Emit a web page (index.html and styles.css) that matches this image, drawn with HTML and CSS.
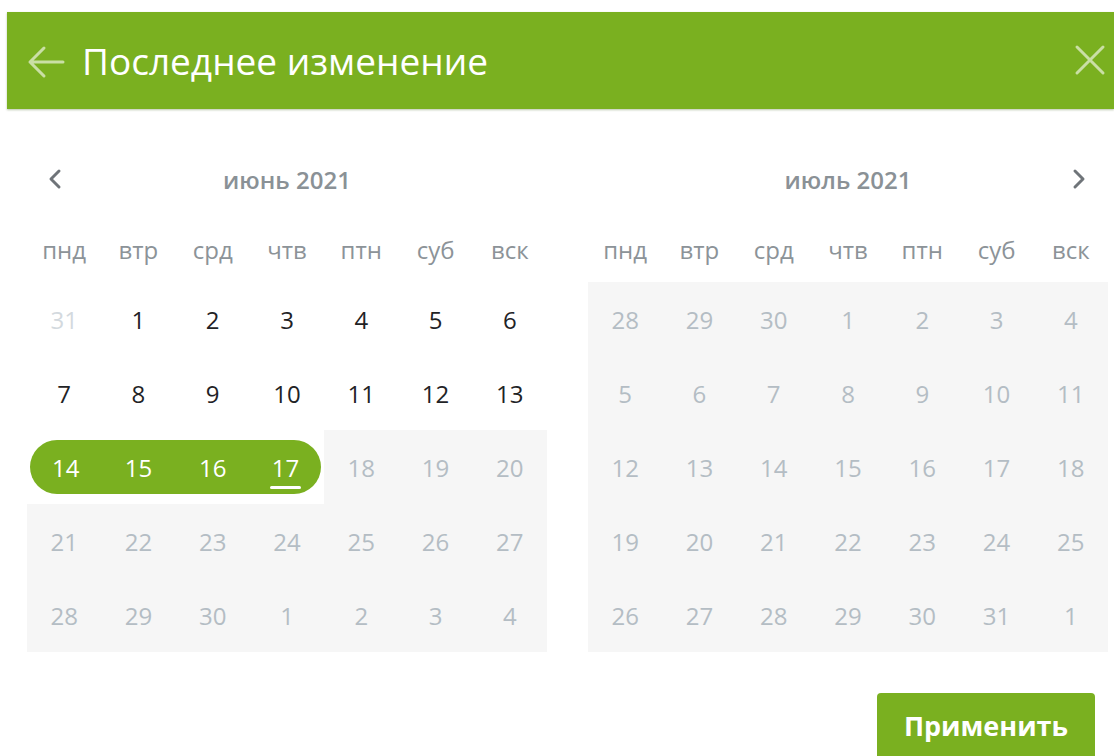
FILE: index.html
```html
<!DOCTYPE html>
<html lang="ru">
<head>
<meta charset="utf-8">
<title>Последнее изменение</title>
<link rel="stylesheet" href="styles.css">
</head>
<body>
<div class="dialog">
  <header class="dialog-head">
    <svg class="icon-back" width="38" height="34" viewBox="0 0 38 34" aria-hidden="true">
      <path d="M36 17H3M17 3L3 17l14 14" fill="none" stroke="currentColor" stroke-width="3" stroke-linecap="round" stroke-linejoin="round"/>
    </svg>
    <h1 class="dialog-title">Последнее изменение</h1>
    <svg class="icon-close" width="32" height="32" viewBox="0 0 32 32" aria-hidden="true">
      <path d="M3 3l26 26M29 3L3 29" fill="none" stroke="currentColor" stroke-width="3" stroke-linecap="round"/>
    </svg>
  </header>

  <div class="calendars">
    <section class="month">
      <div class="month-nav">
        <svg class="chev chev-left" width="16" height="22" viewBox="0 0 16 22" aria-hidden="true">
          <path d="M12 3L4 11l8 8" fill="none" stroke="currentColor" stroke-width="3" stroke-linecap="round" stroke-linejoin="round"/>
        </svg>
        <span class="month-name">июнь 2021</span>
      </div>
      <div class="grid">
        <span class="wd">пнд</span><span class="wd">втр</span><span class="wd">срд</span><span class="wd">чтв</span><span class="wd">птн</span><span class="wd">суб</span><span class="wd">вск</span>

        <span class="day other">31</span><span class="day">1</span><span class="day">2</span><span class="day">3</span><span class="day">4</span><span class="day">5</span><span class="day">6</span>
        <span class="day">7</span><span class="day">8</span><span class="day">9</span><span class="day">10</span><span class="day">11</span><span class="day">12</span><span class="day">13</span>
        <span class="day sel sel-start">14</span><span class="day sel">15</span><span class="day sel">16</span><span class="day sel sel-end"><span class="today">17</span></span><span class="day off">18</span><span class="day off">19</span><span class="day off">20</span>
        <span class="day off">21</span><span class="day off">22</span><span class="day off">23</span><span class="day off">24</span><span class="day off">25</span><span class="day off">26</span><span class="day off">27</span>
        <span class="day off">28</span><span class="day off">29</span><span class="day off">30</span><span class="day off">1</span><span class="day off">2</span><span class="day off">3</span><span class="day off">4</span>
      </div>
    </section>

    <section class="month">
      <div class="month-nav">
        <span class="month-name">июль 2021</span>
        <svg class="chev chev-right" width="16" height="22" viewBox="0 0 16 22" aria-hidden="true">
          <path d="M4 3l8 8-8 8" fill="none" stroke="currentColor" stroke-width="3" stroke-linecap="round" stroke-linejoin="round"/>
        </svg>
      </div>
      <div class="grid">
        <span class="wd">пнд</span><span class="wd">втр</span><span class="wd">срд</span><span class="wd">чтв</span><span class="wd">птн</span><span class="wd">суб</span><span class="wd">вск</span>

        <span class="day off">28</span><span class="day off">29</span><span class="day off">30</span><span class="day off">1</span><span class="day off">2</span><span class="day off">3</span><span class="day off">4</span>
        <span class="day off">5</span><span class="day off">6</span><span class="day off">7</span><span class="day off">8</span><span class="day off">9</span><span class="day off">10</span><span class="day off">11</span>
        <span class="day off">12</span><span class="day off">13</span><span class="day off">14</span><span class="day off">15</span><span class="day off">16</span><span class="day off">17</span><span class="day off">18</span>
        <span class="day off">19</span><span class="day off">20</span><span class="day off">21</span><span class="day off">22</span><span class="day off">23</span><span class="day off">24</span><span class="day off">25</span>
        <span class="day off">26</span><span class="day off">27</span><span class="day off">28</span><span class="day off">29</span><span class="day off">30</span><span class="day off">31</span><span class="day off">1</span>
      </div>
    </section>
  </div>

  <footer class="dialog-foot">
    <button class="btn-apply" type="button">Применить</button>
  </footer>
</div>
</body>
</html>
```

FILE: styles.css
```css
html, body {
  margin: 0;
  padding: 0;
  background: #fff;
  overflow: hidden;
}

body {
  font-family: "Open Sans", "Noto Sans", "DejaVu Sans", sans-serif;
  padding: 12px 0 0 7px;
}

.dialog {
  width: 1107px;
}

/* green title bar */
.dialog-head {
  height: 97px;
  background: #7ab020;
  display: flex;
  align-items: center;
  color: #fff;
  box-shadow: 0 1px 2px rgba(60, 90, 20, 0.35);
  padding: 0 8px 0 20px;
}

.icon-back {
  color: rgba(255, 255, 255, 0.6);
  margin-top: 2px;
  margin-right: 17px;
}

.dialog-title {
  margin: 0;
  font-weight: 400;
  font-size: 37px;
  flex: 1;
  margin-top: 0;
}

.icon-close {
  color: rgba(255, 255, 255, 0.6);
  margin-top: -1px;
}

/* two month panels */
.calendars {
  display: flex;
  gap: 41px;
  padding: 55px 0 0 20px;
}

.month {
  width: 520px;
}

.month-nav {
  height: 30px;
  display: flex;
  align-items: center;
  justify-content: center;
  position: relative;
}

.month-name {
  font-size: 24px;
  font-weight: 600;
  color: #8a9196;
}

.chev {
  color: #6f7479;
  position: absolute;
  top: 4px;
}

.chev-left { left: 20px; }
.chev-right { right: 21px; }

.grid {
  display: grid;
  grid-template-columns: repeat(7, 1fr);
  grid-template-rows: 66px;
  grid-auto-rows: 74px;
  margin-top: 22px;
}

.wd {
  display: flex;
  align-items: center;
  justify-content: center;
  font-size: 24px;
  color: #8c9398;
}

.day {
  display: flex;
  align-items: center;
  justify-content: center;
  font-size: 24px;
  color: #1f2326;
}

.day.other {
  color: #d3d9de;
}

.day.off {
  background: #f6f6f6;
  color: #b4bdc4;
}

.day.sel {
  background: #7ab020;
  color: #fff;
  margin: 10px 0;
}

.day.sel-start {
  margin-left: 3px;
  border-radius: 27px 0 0 27px;
}

.day.sel-end {
  margin-right: 3px;
  border-radius: 0 27px 27px 0;
}

.today {
  position: relative;
}

.today::after {
  content: "";
  position: absolute;
  left: -2px;
  right: -2px;
  bottom: -5px;
  height: 3px;
  border-radius: 2px;
  background: #fff;
}

/* footer with apply action */
.dialog-foot {
  display: flex;
  justify-content: flex-end;
  padding: 41px 19px 0 0;
}

.btn-apply {
  width: 218px;
  height: 68px;
  border: 0;
  border-radius: 4px;
  background: #7ab020;
  color: #fff;
  font-family: inherit;
  font-size: 27px;
  font-weight: 700;
  padding: 0;
  display: flex;
  align-items: flex-start;
  justify-content: center;
  line-height: 66px;
}
```
